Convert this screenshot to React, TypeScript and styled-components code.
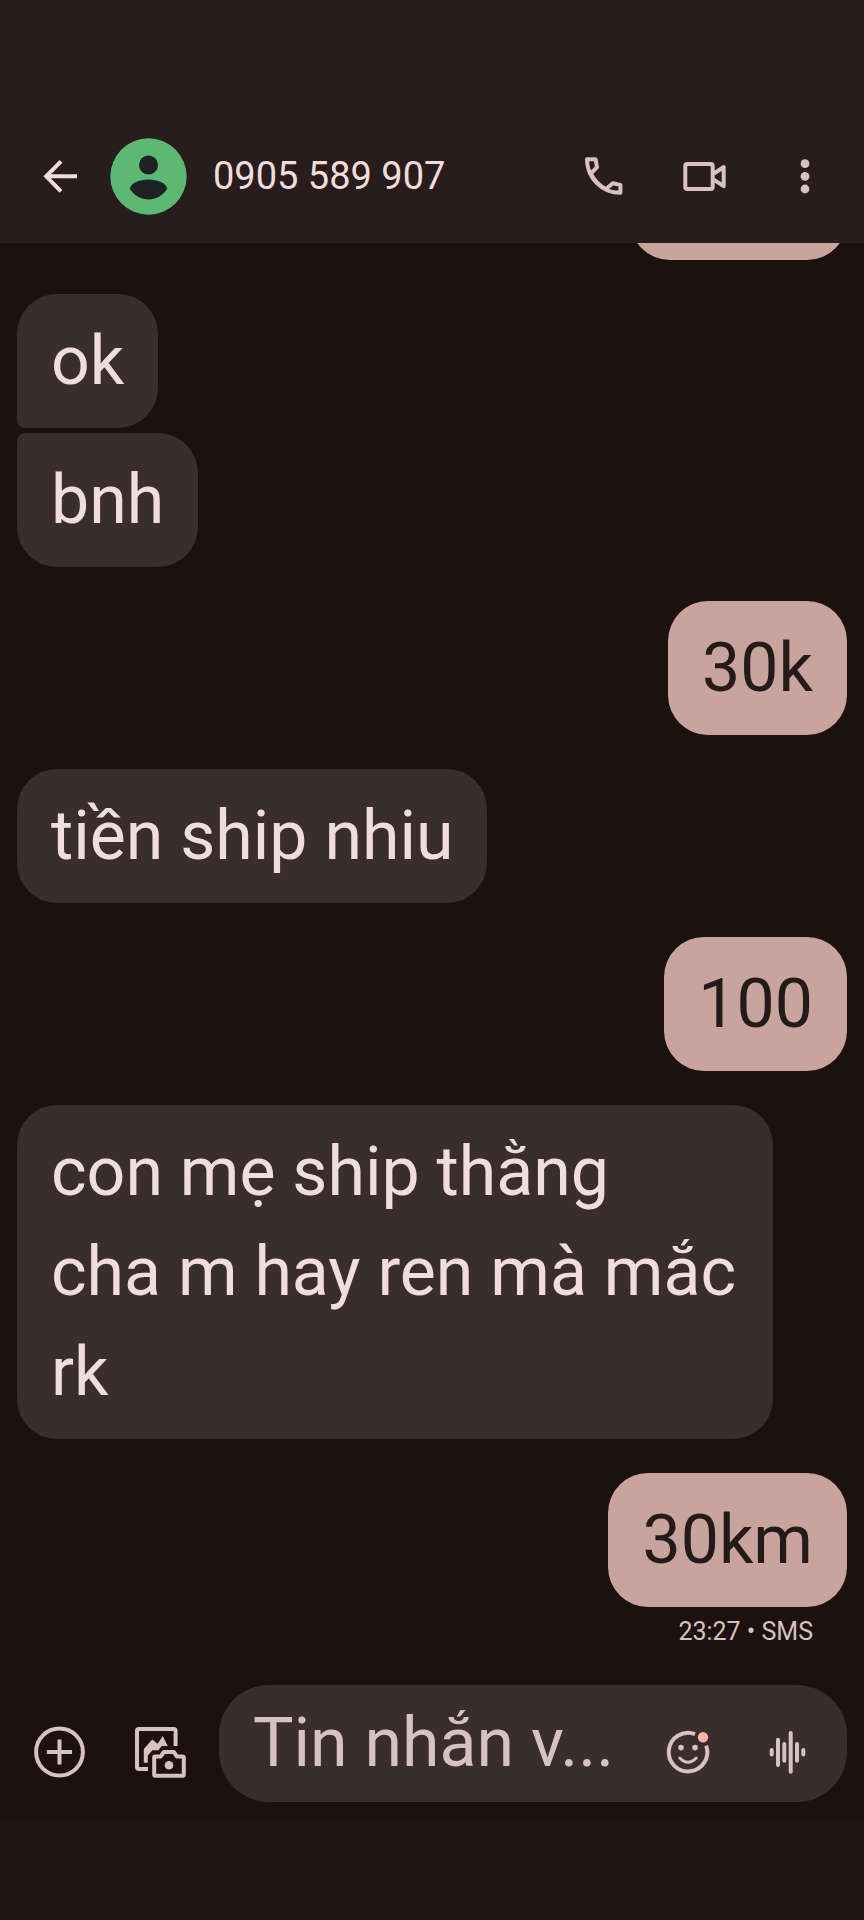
import React from 'react';
import styled, { createGlobalStyle } from 'styled-components';

const color = {
  page: '#1c110f',
  bar: '#281d1c',
  nav: '#201513',
  incoming: '#392d2d',
  outgoing: '#c9a39d',
  text: '#f1dddb',
  textOnPink: '#231a19',
  muted: '#d8c2bf',
  accent: '#ffb4ab',
  avatar: '#5bb974',
  avatarInk: '#202124',
};

const GlobalStyle = createGlobalStyle`
  *, *::before, *::after { box-sizing: border-box; }
  body {
    margin: 0;
    background: ${color.page};
    color: ${color.text};
    font-family: Roboto, "Noto Sans", sans-serif;
  }
`;

const Screen = styled.div`
  display: flex;
  flex-direction: column;
  min-height: 100vh;
`;

const Header = styled.header`
  display: flex;
  align-items: center;
  padding: 126px 10px 17px;
  background: ${color.bar};
`;

const IconButton = styled.button<{ $bright?: boolean }>`
  display: flex;
  flex: none;
  align-items: center;
  justify-content: center;
  width: 100px;
  height: 100px;
  padding: 0;
  border: 0;
  background: none;
  color: ${(p) => (p.$bright ? color.text : color.muted)};
  cursor: pointer;
`;

const Avatar = styled.svg`
  flex: none;
  width: 77px;
  height: 77px;
`;

const ContactName = styled.h1`
  flex: 1;
  min-width: 0;
  margin: 0 0 0 26px;
  font-size: 38px;
  font-weight: 400;
  line-height: 48px;
  white-space: nowrap;
`;

const Thread = styled.main`
  display: flex;
  flex: 1;
  flex-direction: column;
  gap: 34px;
  padding: 0 17px;
`;

const Group = styled.section<{ $sent?: boolean }>`
  display: flex;
  flex-direction: column;
  align-items: ${(p) => (p.$sent ? 'flex-end' : 'flex-start')};
  gap: 5px;
`;

const Bubble = styled.p<{ $sent?: boolean; $place?: 'first' | 'last' }>`
  max-width: calc(100% - 74px);
  margin: 0;
  padding: 17px 34px;
  border-radius: ${(p) =>
    p.$place === 'first' ? '40px 40px 40px 8px' : p.$place === 'last' ? '8px 40px 40px 40px' : '40px'};
  background: ${(p) => (p.$sent ? color.outgoing : color.incoming)};
  color: ${(p) => (p.$sent ? color.textOnPink : color.text)};
  font-size: 68px;
  line-height: 100px;
`;

const ScrolledAway = styled.div`
  display: flex;
  align-items: flex-end;
  justify-content: flex-end;
  height: 17px;
  overflow: hidden;
`;

const ScrolledBubble = styled(Bubble)`
  flex: none;
  width: 217px;
  height: 134px;
`;

const Meta = styled.p`
  margin: 4px 34px 0 0;
  color: ${color.muted};
  font-size: 25px;
  line-height: 32px;
`;

const Composer = styled.form`
  display: flex;
  align-items: flex-end;
  padding: 37px 17px 17px 10px;
`;

const Field = styled.div`
  display: flex;
  flex: 1;
  align-items: flex-end;
  min-width: 0;
  margin-left: 9px;
  padding-right: 9px;
  border-radius: 50px;
  background: ${color.incoming};
`;

const MessageInput = styled.input`
  flex: 1;
  min-width: 0;
  height: 117px;
  padding: 8px 0 9px 34px;
  border: 0;
  outline: 0;
  background: none;
  color: ${color.text};
  font: inherit;
  font-size: 68px;
  line-height: 100px;
  text-overflow: ellipsis;

  &::placeholder {
    color: ${color.muted};
    opacity: 1;
  }
`;

const NavigationArea = styled.footer`
  height: 101px;
  background: ${color.nav};
`;

type IconProps = { size?: number; children: React.ReactNode };

const Icon = ({ size = 50, children }: IconProps) => (
  <svg
    width={size}
    height={size}
    viewBox={`0 0 ${size} ${size}`}
    fill="none"
    stroke="currentColor"
    strokeWidth="4"
    aria-hidden="true"
  >
    {children}
  </svg>
);

const BackIcon = () => (
  <Icon>
    <path d="M42 25.3H12M26 10.4L11.2 25.3L26 40.4" />
  </Icon>
);

const CallIcon = () => (
  <Icon>
    <path
      strokeLinejoin="round"
      d="M8 8.3H16.6L18 16.2L11.8 22.6C15 29 20 34.5 27 38L33.8 32.2L41.4 33.9V41.8C23 41.8 8 27 8 8.3Z"
    />
  </Icon>
);

const VideoIcon = () => (
  <Icon>
    <rect x="6.3" y="13" width="27.4" height="25" rx="2" />
    <path strokeLinejoin="round" d="M35 22.5L44.7 16V35.2L35 28.8" />
  </Icon>
);

const MoreIcon = () => (
  <Icon>
    <g fill="currentColor" stroke="none">
      <circle cx="26" cy="12.7" r="4.4" />
      <circle cx="26" cy="25.3" r="4.4" />
      <circle cx="26" cy="38" r="4.4" />
    </g>
  </Icon>
);

const AddIcon = () => (
  <Icon size={52}>
    <circle cx="25.5" cy="26" r="23.4" />
    <path d="M25.5 13.4V38.6M12.9 26H38.1" />
  </Icon>
);

const GalleryIcon = () => (
  <Icon size={52}>
    <path d="M14 43H5Q3 43 3 41V5Q3 3 5 3H39.5Q41.6 3 41.6 5V20" />
    <path
      fill="currentColor"
      stroke="none"
      d="M9.8 36.7V23L18.2 13.4L23.6 17.8L28.7 10L33.8 20H27.7L24.3 24.2H18.5L13.8 29.5V36.7Z"
    />
    <path
      strokeLinejoin="round"
      d="M20.2 31Q20.2 30.4 21.4 30.4H26.8L29.8 26H39.8L42.8 30.4H48.4Q49.8 30.4 49.8 31.6V48.4Q49.8 49.8 48.4 49.8H21.6Q20.2 49.8 20.2 48.4Z"
    />
    <circle cx="35" cy="39.2" r="4.3" fill="currentColor" stroke="none" />
  </Icon>
);

const EmojiIcon = () => (
  <Icon>
    <path d="M32 7.1A19.3 19.3 0 1 0 43.2 18.6" />
    <circle cx="18" cy="20.6" r="2.8" fill="currentColor" stroke="none" />
    <circle cx="32" cy="20.6" r="2.8" fill="currentColor" stroke="none" />
    <path strokeWidth="3" strokeLinecap="round" d="M16.8 31Q25 39.6 33.2 31" />
    <circle cx="40" cy="10.3" r="5.2" fill={color.accent} stroke="none" />
  </Icon>
);

const VoiceIcon = () => (
  <Icon>
    <path
      strokeLinecap="round"
      d="M8.7 23V27.6M15 12.7V38M21.3 17V33.7M27.7 6V44.7M34 17V33.7M40.3 23V27.6"
    />
  </Icon>
);

export default function App() {
  return (
    <Screen>
      <GlobalStyle />
      <Header>
        <IconButton $bright aria-label="Quay lại">
          <BackIcon />
        </IconButton>
        <Avatar viewBox="0 0 77 77" aria-hidden="true">
          <circle cx="38.5" cy="38.5" r="38.2" fill={color.avatar} />
          <circle cx="38.5" cy="27" r="9.5" fill={color.avatarInk} />
          <path
            fill={color.avatarInk}
            d="M20 50.2C21 45 29 41.4 38.5 41.4S56 45 57 50.2C57.2 52 50 61.4 38.5 61.4S19.8 52 20 50.2Z"
          />
        </Avatar>
        <ContactName>0905 589 907</ContactName>
        <IconButton aria-label="Gọi">
          <CallIcon />
        </IconButton>
        <IconButton aria-label="Gọi video">
          <VideoIcon />
        </IconButton>
        <IconButton aria-label="Tùy chọn khác">
          <MoreIcon />
        </IconButton>
      </Header>

      <Thread>
        <ScrolledAway aria-hidden="true">
          <ScrolledBubble $sent />
        </ScrolledAway>
        <Group>
          <Bubble $place="first">ok</Bubble>
          <Bubble $place="last">bnh</Bubble>
        </Group>
        <Group $sent>
          <Bubble $sent>30k</Bubble>
        </Group>
        <Group>
          <Bubble>tiền ship nhiu</Bubble>
        </Group>
        <Group $sent>
          <Bubble $sent>100</Bubble>
        </Group>
        <Group>
          <Bubble>
            con mẹ ship thằng
            <br />
            cha m hay ren mà mắc rk
          </Bubble>
        </Group>
        <Group $sent>
          <Bubble $sent>30km</Bubble>
          <Meta>23:27 • SMS</Meta>
        </Group>
      </Thread>

      <Composer onSubmit={(e) => e.preventDefault()}>
        <IconButton type="button" aria-label="Thêm">
          <AddIcon />
        </IconButton>
        <IconButton type="button" aria-label="Thư viện và máy ảnh">
          <GalleryIcon />
        </IconButton>
        <Field>
          <MessageInput aria-label="Tin nhắn" placeholder="Tin nhắn v..." />
          <IconButton type="button" aria-label="Biểu tượng cảm xúc">
            <EmojiIcon />
          </IconButton>
          <IconButton type="button" aria-label="Ghi âm">
            <VoiceIcon />
          </IconButton>
        </Field>
      </Composer>
      <NavigationArea />
    </Screen>
  );
}
